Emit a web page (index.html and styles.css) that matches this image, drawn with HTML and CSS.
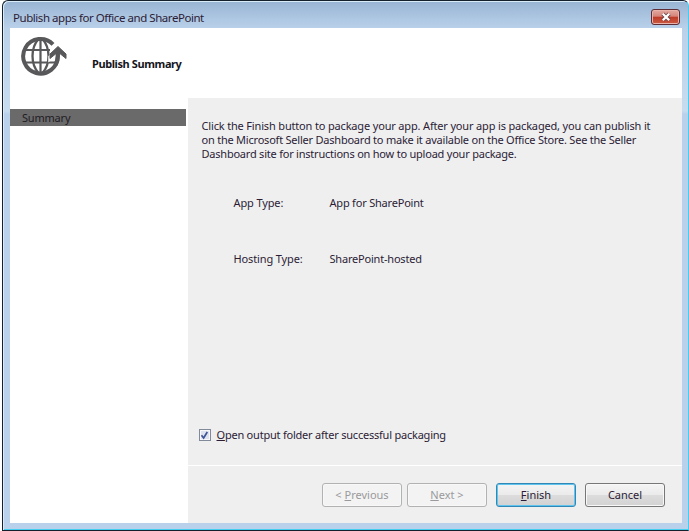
FILE: index.html
```html
<!DOCTYPE html>
<html lang="en">
<head>
<meta charset="utf-8">
<title>Publish apps for Office and SharePoint</title>
<link rel="stylesheet" href="styles.css">
</head>
<body>
<div class="window">
  <div class="titlebar">
    <span class="title">Publish apps for Office and SharePoint</span>
    <button class="close" aria-label="Close">
      <svg width="12" height="10" viewBox="0 0 12 10"><path d="M2.8 1.8 9.2 8.2M9.2 1.8 2.8 8.2" stroke="#6b4548" stroke-width="4"/><path d="M2.8 1.8 9.2 8.2M9.2 1.8 2.8 8.2" stroke="#fff" stroke-width="2.3"/></svg>
    </button>
  </div>
  <div class="client">
    <header class="header">
      <svg class="globe" width="46" height="40" viewBox="0 0 46 40" fill="none" stroke="#58585a">
        <path d="M32 8.300A17.300 17.300 0 1 0 36.800 20V14" stroke-width="4"/>
        <path d="M19.500 3v34M4 14h25M4 26.500h30" stroke-width="2.200"/>
        <path d="M17.500 3C9.500 12 9.500 28 17.500 37M21.500 3C29.500 12 29.500 28 21.500 37" stroke-width="2.300"/>
        <path d="M37 10.500 28 20.500V25L34.200 20.500" fill="#fff" stroke="#fff" stroke-width="1.500"/>
        <path d="M36.800 14V20Q36.800 25 34.500 28.500" stroke-width="4.200"/>
        <path d="M29 22.500V18L37 10.500 45 18V22.500L37 16Z" fill="#58585a" stroke-width="1"/>
      </svg>
      <h1 class="heading">Publish Summary</h1>
    </header>
    <div class="body">
      <nav class="sidebar"><div class="step">Summary</div></nav>
      <main class="main">
        <section class="content">
          <p class="intro"><span class="l1">Click the Finish button to package your app. After your app is packaged, you can publish it</span><br><span class="l2">on the Microsoft Seller Dashboard to make it available on the Office Store. See the Seller</span><br><span class="l3">Dashboard site for instructions on how to upload your package.</span></p>
          <dl class="details">
            <dt>App Type:</dt><dd>App for SharePoint</dd>
            <dt>Hosting Type:</dt><dd>SharePoint-hosted</dd>
          </dl>
          <div class="option">
            <span class="box"><svg width="9" height="9" viewBox="0 0 9 9"><path d="M1.500 4.300 3.600 7 7.300 1" fill="none" stroke="#3f5598" stroke-width="1.700"/></svg></span>
            <span class="label"><u>O</u>pen output folder after successful packaging</span>
          </div>
        </section>
        <footer class="footer">
          <button class="btn off">&lt; <u>P</u>revious</button>
          <button class="btn off next"><u>N</u>ext &gt;</button>
          <button class="btn primary"><u>F</u>inish</button>
          <button class="btn">Cancel</button>
        </footer>
      </main>
    </div>
  </div>
</div>
</body>
</html>
```
FILE: styles.css
```css
* { box-sizing: border-box; }
body {
  margin: 0;
  height: 531px;
  padding-left: 2px;
  overflow: hidden;
  background: #fff;
  font: 11px/14px "Noto Sans", "Open Sans", sans-serif;
  color: #2c1c36;
}
.window {
  height: 531px;
  padding: 0 6px 6px 7px;
  border: 1px solid #14202c;
  border-right-color: #43cdf0;
  border-radius: 6px 6px 0 0;
  background: linear-gradient(#98b4d3 0, #a9c3df 14px, #bad1ea 28px, #c8dcef 110px, #b9d1ea 113px);
  box-shadow: inset 1px 1px 0 #d9ebf8, inset 0 -1px 0 #43cdf0;
}
.titlebar {
  display: flex;
  justify-content: space-between;
  height: 27px;
  padding: 8px 2px 0 3px;
}
.title { font-size: 11.5px; letter-spacing: -0.45px; line-height: 18px; white-space: nowrap; }
.close {
  display: flex;
  align-items: center;
  justify-content: center;
  width: 29px;
  height: 16px;
  padding: 0;
  border: 1px solid #5d2c35;
  border-radius: 3px;
  background: linear-gradient(#e2aaa0 0, #d58479 45%, #bd3b28 50%, #cd5b43 100%);
  box-shadow: inset 0 0 0 1px #e8b3aa;
}
.client { display: flex; flex-direction: column; height: 495px; background: #fff; }
.header { display: flex; height: 70px; padding-left: 11px; }
.globe { margin-top: 8px; }
.heading { margin: 27px 0 0 25px; font-size: 11px; letter-spacing: -0.4px; line-height: 18px; color: #15151c; white-space: nowrap; }
.body { display: flex; flex: 1; }
.sidebar { width: 177.5px; padding: 11px 2px 0 0; }
.step { height: 17px; padding-left: 12px; background: #6a6a6a; letter-spacing: -0.2px; line-height: 18px; color: #1f1b24; }
.main { display: flex; flex: 1; flex-direction: column; background: #efefef; }
.content { height: 368px; padding: 21px 0 0 14px; border-bottom: 1px solid #fff; }
.intro { height: 42px; margin: 0; white-space: nowrap; }
.l1 { letter-spacing: -0.165px; }
.l2 { letter-spacing: -0.22px; }
.l3 { letter-spacing: -0.22px; }
.details { display: grid; grid-template-columns: 96px 1fr; grid-auto-rows: 56px; margin: 35px 0 0 32px; letter-spacing: -0.2px; }
.details dt { letter-spacing: -0.12px; }
.details dd { margin: 0; }
.option { display: flex; align-items: center; height: 14px; margin: 120px 0 0 -3px; }
.box { display: flex; align-items: center; justify-content: center; width: 12px; height: 12px; border: 1px solid #818a99; background: #dde4f0; box-shadow: inset 0 0 0 1px #f8f8fa; }
.label { margin-left: 6px; letter-spacing: -0.22px; white-space: nowrap; }
.footer { display: flex; gap: 8px; padding: 17px 0 0 134.5px; }
.btn {
  width: 80px;
  height: 24px;
  padding: 0;
  border: 1px solid #777;
  border-radius: 3px;
  background: linear-gradient(#f4f4f4 0, #ebebeb 48%, #dcdcdc 52%, #d2d2d2 100%);
  box-shadow: inset 0 0 0 1px #f8f8f8;
  font: inherit;
  color: inherit;
}
.btn.off { border-color: #b0b2b4; background: #f3f3f3; color: #9a9a9c; margin-right: -3px; }
.btn.next { margin-right: 1px; }
.btn.primary { margin-right: 1px; border-color: #3288b5; box-shadow: inset 0 0 0 1px #5fc4ee; }
u { text-underline-offset: 1px; text-decoration-thickness: 1px; }
```
